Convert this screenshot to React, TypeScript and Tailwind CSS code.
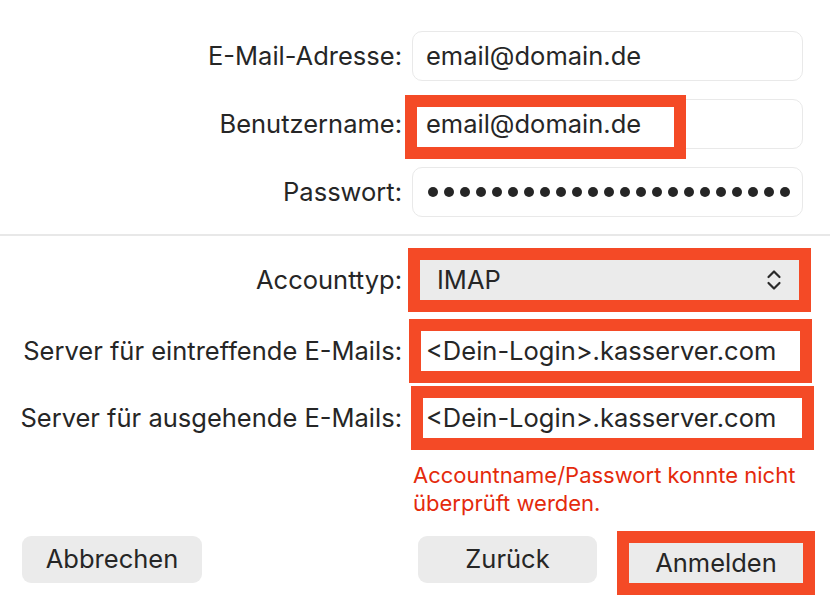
const RED = "border-[#f44a26]";

function Dots() {
  return (
    <div className="flex h-full items-center gap-[6px] overflow-hidden">
      {Array.from({ length: 26 }).map((_, i) => (
        <div key={i} className="h-[10px] w-[10px] shrink-0 rounded-full bg-[#262626]" />
      ))}
    </div>
  );
}

function Chevrons() {
  return (
    <svg width="16" height="22" viewBox="0 0 16 22" fill="none" stroke="#2a2a2a" strokeWidth="2.2" strokeLinecap="round" strokeLinejoin="round">
      <path d="M2.5 8 L8 2.5 L13.5 8" />
      <path d="M2.5 14 L8 19.5 L13.5 14" />
    </svg>
  );
}

function Label({ children }: { children: React.ReactNode }) {
  return <div className="w-[402px] shrink-0 text-right">{children}</div>;
}

export default function App() {
  return (
    <div
      className="relative h-[606px] w-[830px] overflow-hidden bg-white text-[25.5px] text-[#262626]"
      style={{ fontFamily: "Inter, 'Noto Sans', sans-serif" }}
    >
      {/* Account fields */}
      <div className="flex flex-col gap-[18px] pt-[31px]">
        <div className="flex items-center">
          <Label>E-Mail-Adresse:</Label>
          <div className="ml-[10px] flex h-[50px] w-[391px] items-center rounded-[10px] border border-[#e9e9e9] pl-[13px]">
            email@domain.de
          </div>
        </div>
        <div className="flex items-center">
          <Label>Benutzername:</Label>
          <div className="relative ml-[10px] flex h-[50px] w-[391px] items-center rounded-[10px] border border-[#e9e9e9] pl-[13px]">
            <div className={`absolute -left-[8px] -top-[5px] h-[64px] w-[281px] border-[12px] ${RED}`} />
            <span className="relative">email@domain.de</span>
          </div>
        </div>
        <div className="flex items-center">
          <Label>Passwort:</Label>
          <div className="ml-[10px] h-[50px] w-[391px] rounded-[10px] border border-[#e9e9e9] pl-[15px] pr-[10px]">
            <Dots />
          </div>
        </div>
      </div>

      <div className="mt-[17px] h-[2px] w-full bg-[#e8e8e8]" />

      {/* Server settings */}
      <div className="mt-[12px] flex flex-col">
        <div className="flex items-center">
          <Label>Accounttyp:</Label>
          <div className={`ml-[6px] h-[64px] w-[403px] border-[12px] ${RED}`}>
            <div className="flex h-full items-center justify-between bg-[#ebebeb] pl-[17px] pr-[17px]">
              <span>IMAP</span>
              <Chevrons />
            </div>
          </div>
        </div>
        <div className="mt-[7px] flex items-center">
          <Label>Server für eintreffende E-Mails:</Label>
          <div className={`ml-[7px] h-[64px] w-[403px] border-[12px] ${RED}`}>
            <div className="flex h-full items-center bg-white pl-[5px]">&lt;Dein-Login&gt;.kasserver.com</div>
          </div>
        </div>
        <div className="mt-[3px] flex items-center">
          <Label>Server für ausgehende E-Mails:</Label>
          <div className={`ml-[9px] h-[64px] w-[403px] border-[12px] ${RED}`}>
            <div className="flex h-full items-center bg-white pl-[3px]">&lt;Dein-Login&gt;.kasserver.com</div>
          </div>
        </div>
      </div>

      <div className="mt-[11px] pl-[413px] text-[22px] leading-[28px] text-[#e42a0c]">
        Accountname/Passwort konnte nicht
        <br />
        überprüft werden.
      </div>

      {/* Buttons */}
      <div className="mt-[14px] flex items-start">
        <button className="ml-[22px] mt-[5px] h-[47px] w-[180px] rounded-[9px] bg-[#ebebeb]">Abbrechen</button>
        <button className="ml-[216px] mt-[5px] h-[47px] w-[179px] rounded-[9px] bg-[#ebebeb]">Zurück</button>
        <div className={`ml-[20px] h-[64px] w-[198px] border-[12px] ${RED}`}>
          <div className="flex h-full items-center justify-center bg-[#ebebeb]">Anmelden</div>
        </div>
      </div>
    </div>
  );
}
